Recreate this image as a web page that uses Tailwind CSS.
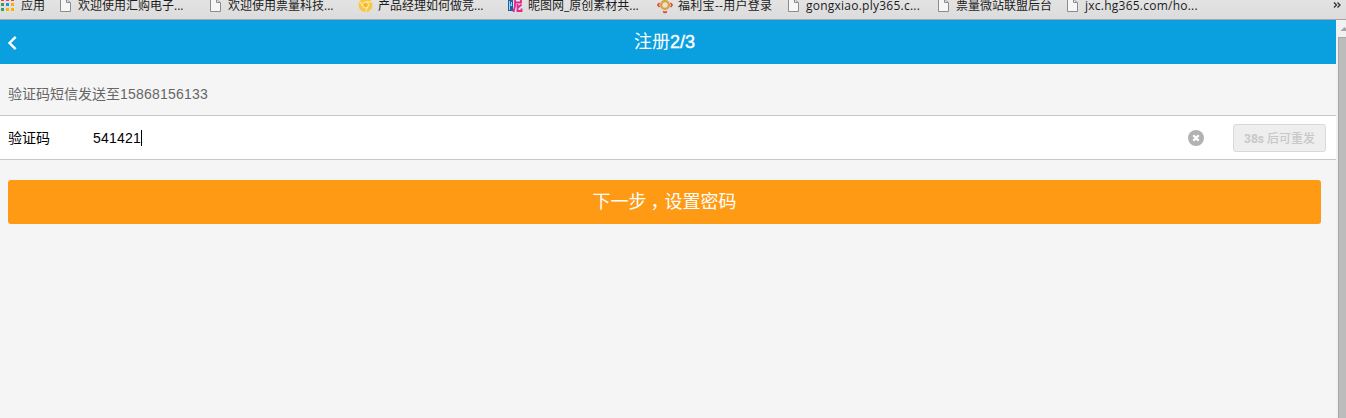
<!DOCTYPE html>
<html lang="zh-CN">
<head>
<meta charset="utf-8">
<title>注册2/3</title>
<script src="https://cdn.jsdelivr.net/npm/@tailwindcss/browser@4"></script>
</head>
<body class="w-[1346px] h-[418px] overflow-hidden bg-[#f5f5f5] font-['Liberation_Sans','Noto_Sans_CJK_SC',sans-serif] flex flex-col">
<svg class="hidden">
  <symbol id="doc" viewBox="0 0 11 14"><path d="M.5 -1H6.500L10.500 3V11.500H.5Z" fill="#f6f6f6" stroke="#8c8c8c"/><path d="M6.500 -1V2.500H10.500" fill="none" stroke="#8c8c8c"/></symbol>
</svg>
<nav class="h-5 shrink-0 border-b border-[#a5a5a5] bg-linear-to-b from-[#e3e3e3] to-[#dcdcdc] flex text-[12px] leading-[12px] text-[#1c1c1c] font-['Open_Sans','Noto_Sans_CJK_SC',sans-serif] whitespace-nowrap">
  <div class="w-[60px] flex shrink-0"><svg class="w-[21px] h-3 shrink-0" viewBox="0 0 21 12" shape-rendering="crispEdges"><path d="M1 0h3v1H1zM6 0h3v1H6zM11 0h3v1h-3z" fill="#ea4335"/><path d="M1 3h3v3H1z" fill="#34a05a"/><path d="M6 3h3v3H6z" fill="#2a8cf0"/><path d="M11 3h3v3h-3z" fill="#f5b400"/><path d="M1 8h3v3H1z" fill="#34a05a"/><path d="M6 8h3v3H6zM11 8h3v3h-3z" fill="#f5b400"/></svg><span>应用</span></div>
  <div class="w-[150px] flex shrink-0"><svg class="w-[11px] h-[14px] mr-[7px] shrink-0"><use href="#doc"/></svg><span>欢迎使用汇购电子...</span></div>
  <div class="w-[148px] flex shrink-0"><svg class="w-[11px] h-[14px] mr-[7px] shrink-0"><use href="#doc"/></svg><span>欢迎使用票量科技...</span></div>
  <div class="w-[150px] flex shrink-0"><svg class="w-[15px] h-[14px] mr-[5px] shrink-0" viewBox="0 0 15 14"><circle cx="7.500" cy="5" r="7" fill="#f9c841"/><circle cx="7.500" cy="5" r="3" fill="#f6b930" stroke="#fff0b8"/><path d="M7.500 2h6M5 6.500L2 2M10 6.500L7.500 11.500" stroke="#fff0b8" fill="none"/></svg><span>产品经理如何做竞...</span></div>
  <div class="w-[149px] flex shrink-0"><svg class="w-[15px] h-[14px] mr-[5px] shrink-0" viewBox="0 0 15 14"><path d="M0 0h5v11H0z" fill="#1763a5"/><path d="M1.500 1v9M3.500 2v4M1.500 5h2" stroke="#a8d1ef" fill="none"/><path d="M7 0V2.500H13V0M7 2V6L5.500 12M9.500 4V11H13.500V8.500M13.500 4.500L10 7.500" fill="none" stroke="#e6248c" stroke-width="1.800"/></svg><span>昵图网_原创素材共...</span></div>
  <div class="w-[131px] flex shrink-0"><svg class="w-4 h-[14px] mr-[5px] shrink-0" viewBox="0 0 16 14"><circle cx="8" cy="5" r="3.900" fill="#e8e0d8" stroke="#d9a33a" stroke-width="2.400"/><path d="M2.500 3L.8 5L2.500 7M13.500 3L15.200 5L13.500 7M6 11.500L8 12.500L10 11.500" fill="none" stroke="#e2453c" stroke-width="1.600"/></svg><span class="tracking-[0.3px]">福利宝--用户登录</span></div>
  <div class="w-[150px] flex shrink-0"><svg class="w-[11px] h-[14px] mr-[7px] shrink-0"><use href="#doc"/></svg><span class="tracking-[0.24px]">gongxiao.ply365.c...</span></div>
  <div class="w-[129px] flex shrink-0"><svg class="w-[11px] h-[14px] mr-[7px] shrink-0"><use href="#doc"/></svg><span>票量微站联盟后台</span></div>
  <div class="flex-1 flex"><svg class="w-[11px] h-[14px] mr-[7px] shrink-0"><use href="#doc"/></svg><span class="tracking-[0.24px]">jxc.hg365.com/ho...</span></div>
  <svg class="w-[13px] h-3 shrink-0" viewBox="0 0 13 12"><path d="M1 2.500L3.500 5L1 7.500M4.500 2.500L7 5L4.500 7.500" fill="none" stroke="#333" stroke-width="1.300"/></svg>
</nav>
<div class="flex flex-1 min-h-0">
  <main class="w-[1336px] shrink-0 flex flex-col">
    <header class="h-11 shrink-0 bg-[#0a9fdf] text-white grid grid-cols-[1fr_auto_1fr] items-center text-[18px]">
      <svg class="w-3 h-4 ml-[7px] mt-[2px]" viewBox="0 0 12 16"><path d="M8.700 1.800L2.500 8L8.700 14.200" fill="none" stroke="#fff" stroke-width="2.400"/></svg>
      <h1 class="leading-[44px] ml-[-7px]">注册<span class="[-webkit-text-stroke:0.4px_white]">2/3</span></h1>
    </header>
    <p class="h-[51px] pt-[9px] shrink-0 pl-2 leading-[42px] text-[14px] text-[#666]">验证码短信发送至<span class="tracking-[0.22px]">15868156133</span></p>
    <div class="h-[45px] shrink-0 bg-white border-y border-[#c8c8c8] flex items-center pl-2 pr-[10px] text-[14px] text-black">
      <label class="w-[85px] pt-[2px]">验证码</label>
      <div class="flex-1 flex items-center"><span class="tracking-[0.2px] pt-[2px]">541421</span><i class="w-px h-4 bg-black"></i></div>
      <svg class="w-4 h-4 mr-[29px]" viewBox="0 0 16 16"><circle cx="8" cy="8" r="8" fill="#b2b2b2"/><path d="M5.300 5.300L10.700 10.700M10.700 5.300L5.300 10.700" stroke="#fff" stroke-width="2.300"/></svg>
      <button class="w-[93px] h-7 pt-[2px] rounded-[3px] border border-[#d9d9d9] bg-[#eee] text-[12px] text-[#c8c8c8] whitespace-nowrap"><span class="font-bold font-['Roboto']">38s </span><span class="font-medium">后可重发</span></button>
    </div>
    <button class="mt-5 ml-2 w-[1313px] h-11 shrink-0 rounded-[3px] bg-[#ff9a14] text-white text-[18px] leading-[44px]">下一步<span class="inline-block translate-x-1">，</span>设置密码</button>
  </main>
  <aside class="w-[10px] bg-[#f1f1f1] flex flex-col overflow-hidden">
    <svg class="w-[10px] h-[17px] shrink-0" viewBox="0 0 10 17"><path d="M4.500 11L8.500 7L12.500 11Z" fill="#a3a3a3"/></svg>
    <div class="ml-[2px] flex-1 border-l border-t border-[#a8a8a8] bg-[#bcbcbc]"></div>
  </aside>
</div>
</body>
</html>
